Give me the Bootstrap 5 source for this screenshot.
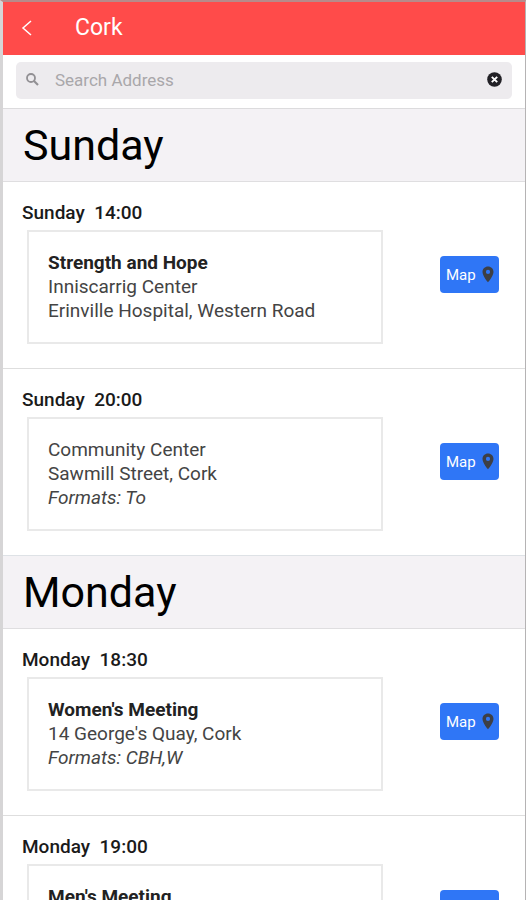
<!DOCTYPE html>
<html lang="en">
<head>
<meta charset="utf-8">
<meta name="viewport" content="width=device-width, initial-scale=1">
<title>Cork meetings</title>
<link href="https://cdn.jsdelivr.net/npm/bootstrap@5.3.0/dist/css/bootstrap.min.css" rel="stylesheet">
<style>
body { font-family: Roboto, "Liberation Sans", sans-serif; font-size: 19px; line-height: 24px; color: #444; }
.app-shell { border-top: 2px solid #b88a8a; border-left: 3px solid #d6d5d6; border-right: 1px solid #b5b3b4; background: #fff; }
.app-header { background: #ff4b4a; height: 53px; padding: 0 16px 2px; }
.app-header h1 { font-size: 23px; line-height: 32px; }
.back-link { width: 56px; }
.search-area { padding: 7px 13px 9px; border-bottom: 1px solid #dcdbdd; }
.search-box { background: #edebee; border-radius: 5px; height: 37px; padding: 0 10px 2px; }
.search-box input { font-size: 17px; line-height: 24px; color: #444; padding: 0 0 0 16px; }
.search-box input::placeholder { color: #a9a7aa; opacity: 1; }
.meeting-scroll { scrollbar-width: none; }
.meeting-scroll::-webkit-scrollbar { display: none; }
.day-heading { background: #f4f2f5; border-bottom: 1px solid #dfdee0; font-size: 43px; line-height: 72px; padding-left: 20px; color: #000; font-weight: 400; }
.meeting-row { padding: 19px 26px 24px 19px; }
.meeting-row + .meeting-row { border-top: 1px solid #dedede; }
.meeting-time { font-size: 19px; line-height: 24px; font-weight: 500; color: #1a1a1a; margin-bottom: 5px; white-space: pre; }
.meeting-body { padding-left: 5px; }
.meeting-info { border: 2px solid #e9e9e9; margin-right: 57px; min-height: 114px; padding: 19px 18px 19px 19px; }
.meeting-name { font-weight: 700; color: #222; }
.map-btn, .map-btn:hover { background: #2f76f6; color: #fff; font-size: 15px; line-height: 24px; border: 0; border-radius: 4px; width: 59px; height: 37px; padding: 0 5px 0 6px; margin-top: 26px; }
</style>
<script src="https://cdn.jsdelivr.net/npm/bootstrap@5.3.0/dist/js/bootstrap.bundle.min.js"></script>
</head>
<body>
<svg class="d-none" aria-hidden="true">
  <symbol id="pin" viewBox="0 0 12 18"><path fill="#3d3f45" fill-rule="evenodd" d="M6 0.5C2.9 0.5 .5 2.9 .5 5.9C.5 10 6 16.3 6 16.3S11.5 10 11.5 5.9C11.5 2.9 9.1.5 6 .5ZM6 3.8a2.1 2.1 0 1 1 0 4.2a2.1 2.1 0 0 1 0-4.2Z"/></symbol>
</svg>
<div class="app-shell d-flex flex-column vh-100 overflow-hidden">
  <header class="app-header d-flex align-items-center flex-shrink-0">
    <a href="#" class="back-link d-flex" aria-label="Back">
      <svg width="16" height="18" viewBox="0 0 16 18" fill="none" stroke="#fff" stroke-width="1.5"><path d="M12 2L4 9l8 7"/></svg>
    </a>
    <h1 class="m-0 fw-normal text-white">Cork</h1>
  </header>
  <form class="search-area flex-shrink-0" role="search">
    <div class="search-box d-flex align-items-center">
      <label for="address" aria-label="Search Address" class="d-flex"><svg width="13" height="16" viewBox="0 0 13 16" fill="none" stroke="#929094"><circle cx="5" cy="6" r="4" stroke-width="1.8"/><path d="M8 9l4 4" stroke-width="2.2"/></svg></label>
      <input id="address" type="text" class="border-0 bg-transparent flex-fill shadow-none" placeholder="Search Address">
      <button type="button" class="btn p-0 border-0 d-flex" aria-label="Clear search">
        <svg width="15" height="18" viewBox="0 0 15 18"><circle cx="7.5" cy="8.5" r="7.3" fill="#222126"/><path d="M4.8 5.8l5.4 5.4M10.2 5.8l-5.4 5.4" stroke="#fff" stroke-width="1.9"/></svg>
      </button>
    </div>
  </form>
  <main class="meeting-scroll flex-fill overflow-auto">
    <section>
      <h2 class="day-heading m-0 pe-3">Sunday</h2>
      <article class="meeting-row">
        <h3 class="meeting-time">Sunday  14:00</h3>
        <div class="meeting-body d-flex align-items-start">
          <div class="meeting-info flex-fill">
            <div class="meeting-name">Strength and Hope</div>
            <div>Inniscarrig Center</div>
            <div>Erinville Hospital, Western Road</div>
          </div>
          <button type="button" class="btn map-btn d-flex flex-shrink-0 align-items-center justify-content-between"><span>Map</span><svg width="12" height="18"><use href="#pin"/></svg></button>
        </div>
      </article>
      <article class="meeting-row">
        <h3 class="meeting-time">Sunday  20:00</h3>
        <div class="meeting-body d-flex align-items-start">
          <div class="meeting-info flex-fill">
            <div>Community Center</div>
            <div>Sawmill Street, Cork</div>
            <div class="fst-italic">Formats: To</div>
          </div>
          <button type="button" class="btn map-btn d-flex flex-shrink-0 align-items-center justify-content-between"><span>Map</span><svg width="12" height="18"><use href="#pin"/></svg></button>
        </div>
      </article>
    </section>
    <section class="border-top">
      <h2 class="day-heading m-0 pe-3">Monday</h2>
      <article class="meeting-row">
        <h3 class="meeting-time">Monday  18:30</h3>
        <div class="meeting-body d-flex align-items-start">
          <div class="meeting-info flex-fill">
            <div class="meeting-name">Women's Meeting</div>
            <div>14 George's Quay, Cork</div>
            <div class="fst-italic">Formats: CBH,W</div>
          </div>
          <button type="button" class="btn map-btn d-flex flex-shrink-0 align-items-center justify-content-between"><span>Map</span><svg width="12" height="18"><use href="#pin"/></svg></button>
        </div>
      </article>
      <article class="meeting-row">
        <h3 class="meeting-time">Monday  19:00</h3>
        <div class="meeting-body d-flex align-items-start">
          <div class="meeting-info flex-fill">
            <div class="meeting-name">Men's Meeting</div>
          </div>
          <button type="button" class="btn map-btn d-flex flex-shrink-0 align-items-center justify-content-between"><span>Map</span><svg width="12" height="18"><use href="#pin"/></svg></button>
        </div>
      </article>
    </section>
  </main>
</div>
</body>
</html>
